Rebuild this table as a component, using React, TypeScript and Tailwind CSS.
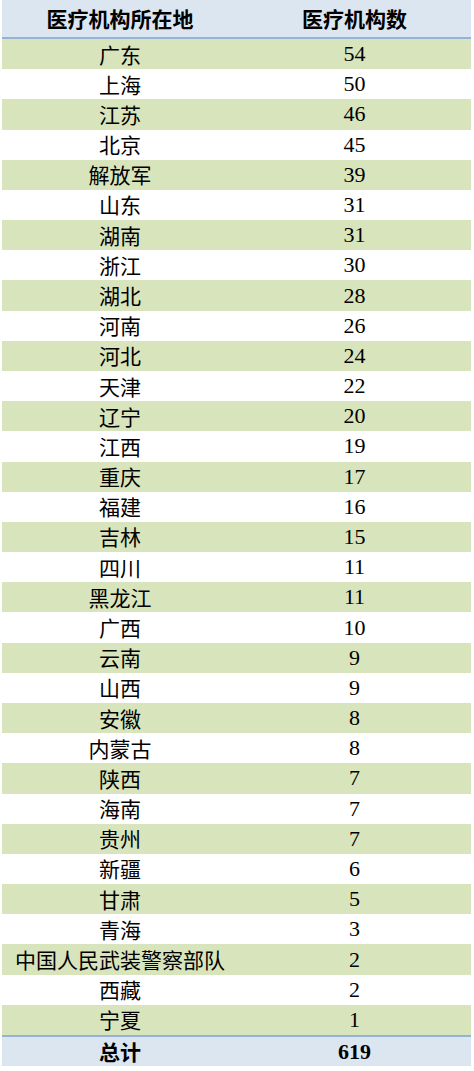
const rows: [string, number][] = [
  ['广东', 54],
  ['上海', 50],
  ['江苏', 46],
  ['北京', 45],
  ['解放军', 39],
  ['山东', 31],
  ['湖南', 31],
  ['浙江', 30],
  ['湖北', 28],
  ['河南', 26],
  ['河北', 24],
  ['天津', 22],
  ['辽宁', 20],
  ['江西', 19],
  ['重庆', 17],
  ['福建', 16],
  ['吉林', 15],
  ['四川', 11],
  ['黑龙江', 11],
  ['广西', 10],
  ['云南', 9],
  ['山西', 9],
  ['安徽', 8],
  ['内蒙古', 8],
  ['陕西', 7],
  ['海南', 7],
  ['贵州', 7],
  ['新疆', 6],
  ['甘肃', 5],
  ['青海', 3],
  ['中国人民武装警察部队', 2],
  ['西藏', 2],
  ['宁夏', 1],
];

const cjk = "font-[family-name:'Noto_Sans_CJK_SC',sans-serif]";
const serif = "font-[family-name:'Liberation_Serif',serif]";

export default function App() {
  return (
    <div className="w-[474px] h-[1071px] bg-white pl-[2px] pr-[3px] text-black">
      {/* header */}
      <div className="grid grid-cols-[236px_1fr] h-[39px] bg-[#dce6f1] border-b-2 border-[#95b3d7]">
        <div className={`${cjk} flex items-center justify-center text-[21px] font-bold`}>医疗机构所在地</div>
        <div className={`${cjk} flex items-center justify-center text-[21px] font-bold`}>医疗机构数</div>
      </div>

      {/* data rows */}
      <div className="grid grid-rows-[repeat(33,1fr)] h-[996px]">
        {rows.map(([name, count], i) => (
          <div
            key={name}
            className={`grid grid-cols-[236px_1fr] ${i % 2 === 0 ? 'bg-[#d8e4bc]' : 'bg-white'}`}
          >
            <div className={`${cjk} flex items-center justify-center text-[21px] leading-none`}>{name}</div>
            <div className={`${serif} flex items-center justify-center text-[22px] leading-none`}>{count}</div>
          </div>
        ))}
      </div>

      {/* total */}
      <div className="grid grid-cols-[236px_1fr] h-[31px] bg-[#dce6f1] border-t-2 border-[#95b3d7]">
        <div className={`${cjk} flex items-center justify-center text-[21px] font-bold leading-none`}>总计</div>
        <div className={`${serif} flex items-center justify-center text-[22px] font-bold leading-none`}>619</div>
      </div>
    </div>
  );
}
